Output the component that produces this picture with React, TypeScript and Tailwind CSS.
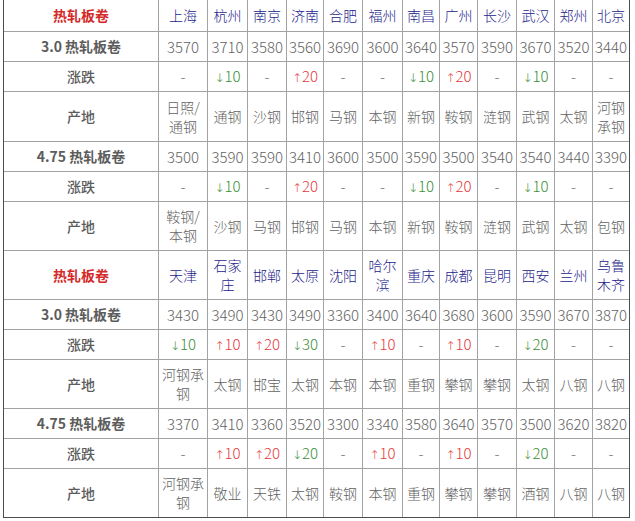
import React from "react";

type Chg = string;

const sec1 = {
  cities: ["上海", "杭州", "南京", "济南", "合肥", "福州", "南昌", "广州", "长沙", "武汉", "郑州", "北京"],
  p30: ["3570", "3710", "3580", "3560", "3690", "3600", "3640", "3570", "3590", "3670", "3520", "3440"],
  c30: ["-", "↓10", "-", "↑20", "-", "-", "↓10", "↑20", "-", "↓10", "-", "-"],
  o30: ["日照/|通钢", "通钢", "沙钢", "邯钢", "马钢", "本钢", "新钢", "鞍钢", "涟钢", "武钢", "太钢", "河钢|承钢"],
  p475: ["3500", "3590", "3590", "3410", "3600", "3500", "3590", "3500", "3540", "3540", "3440", "3390"],
  c475: ["-", "↓10", "-", "↑20", "-", "-", "↓10", "↑20", "-", "↓10", "-", "-"],
  o475: ["鞍钢/|本钢", "沙钢", "马钢", "邯钢", "马钢", "本钢", "新钢", "鞍钢", "涟钢", "武钢", "太钢", "包钢"],
};

const sec2 = {
  cities: ["天津", "石家|庄", "邯郸", "太原", "沈阳", "哈尔|滨", "重庆", "成都", "昆明", "西安", "兰州", "乌鲁|木齐"],
  p30: ["3430", "3490", "3430", "3490", "3360", "3400", "3640", "3680", "3600", "3590", "3670", "3870"],
  c30: ["↓10", "↑10", "↑20", "↓30", "-", "↑10", "-", "↑10", "-", "↓20", "-", "-"],
  o30: ["河钢承|钢", "太钢", "邯宝", "太钢", "本钢", "本钢", "重钢", "攀钢", "攀钢", "太钢", "八钢", "八钢"],
  p475: ["3370", "3410", "3360", "3520", "3300", "3340", "3580", "3640", "3570", "3500", "3620", "3820"],
  c475: ["-", "↑10", "↑20", "↓20", "-", "↑10", "-", "↑10", "-", "↓20", "-", "-"],
  o475: ["河钢承|钢", "敬业", "天铁", "太钢", "鞍钢", "本钢", "重钢", "攀钢", "攀钢", "酒钢", "八钢", "八钢"],
};

function Lines({ t }: { t: string }) {
  const parts = t.split("|");
  return (
    <span>
      {parts.map((p, i) => (
        <React.Fragment key={i}>
          {i > 0 && <br />}
          {p}
        </React.Fragment>
      ))}
    </span>
  );
}

const cell = "bg-white flex items-center justify-center text-center leading-[19px]";

function Label({ children, red, heavy }: { children: React.ReactNode; red?: boolean; heavy?: boolean }) {
  return (
    <div
      className={`${cell} text-[14px] ${heavy ? "font-bold" : "font-medium"} ${
        red ? "text-[#d42a2a]" : "text-[#5c5c5c]"
      }`}
    >
      {children}
    </div>
  );
}

function ChgCell({ v }: { v: Chg }) {
  const color = v.startsWith("↓") ? "text-[#3a8f35]" : v.startsWith("↑") ? "text-[#e5383b]" : "text-[#707070]";
  return (
    <div className={`${cell} text-[15px] font-light ${color}`}>
      {v.startsWith("↓") || v.startsWith("↑") ? (
        <span>
          <span className="font-['DejaVu_Sans',sans-serif] text-[12px]">{v[0]}</span>
          {v.slice(1)}
        </span>
      ) : (
        v
      )}
    </div>
  );
}

const data = `${cell} text-[14px] font-light text-[#626262]`;
const num = `${cell} text-[15px] font-light text-[#626262]`;

function Section({ d }: { d: typeof sec1 }) {
  return (
    <>
      <Label red heavy>热轧板卷</Label>
      {d.cities.map((c, i) => (
        <div key={"c" + i} className={`${cell} text-[14px] font-light text-[#23238a]`}>
          <Lines t={c} />
        </div>
      ))}
      <Label heavy>3.0 热轧板卷</Label>
      {d.p30.map((p, i) => (
        <div key={"p" + i} className={num}>{p}</div>
      ))}
      <Label>涨跌</Label>
      {d.c30.map((c, i) => (
        <ChgCell key={"x" + i} v={c} />
      ))}
      <Label>产地</Label>
      {d.o30.map((o, i) => (
        <div key={"o" + i} className={data}>
          <Lines t={o} />
        </div>
      ))}
      <Label heavy>4.75 热轧板卷</Label>
      {d.p475.map((p, i) => (
        <div key={"q" + i} className={num}>{p}</div>
      ))}
      <Label>涨跌</Label>
      {d.c475.map((c, i) => (
        <ChgCell key={"y" + i} v={c} />
      ))}
      <Label>产地</Label>
      {d.o475.map((o, i) => (
        <div key={"r" + i} className={data}>
          <Lines t={o} />
        </div>
      ))}
    </>
  );
}

export default function App() {
  return (
    <div className="w-[635px] h-[521px] bg-white font-['Noto_Sans_CJK_SC','Noto_Sans',sans-serif] overflow-hidden">
      <div className="ml-[3px] w-[627px] grid grid-cols-[154px_48px_39px_38px_36px_38px_39px_36px_37px_38px_37px_37px_36px] grid-rows-[31px_29px_29px_49px_29px_29px_48px_48px_29px_29px_48px_29px_29px_48px] gap-px bg-[#a3a3a3] border-l border-r border-b border-[#4d4d4d]">
        <Section d={sec1} />
        <Section d={sec2} />
      </div>
    </div>
  );
}
